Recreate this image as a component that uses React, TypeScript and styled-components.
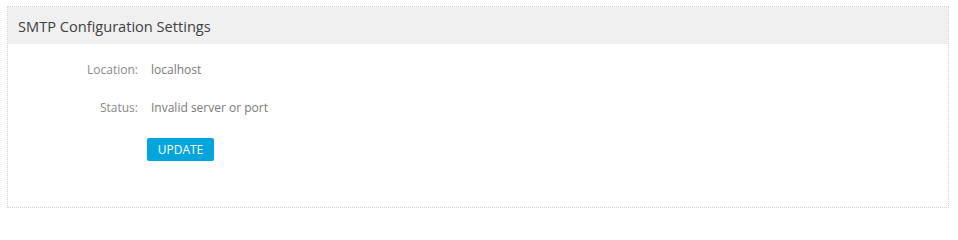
import styled, { createGlobalStyle } from 'styled-components';

const GlobalStyle = createGlobalStyle`
  html, body {
    margin: 0;
    padding: 0;
    background: #fff;
  }
  body {
    font-family: 'Open Sans', 'Liberation Sans', sans-serif;
  }
`;

const Page = styled.div`
  padding: 6px 9px 7px 7px;
`;

const Panel = styled.section`
  border: 1px dotted #d4d4d4;
  height: 202px;
  box-sizing: border-box;
  background: #fff;
`;

const Header = styled.header`
  background: #f0f0f0;
  height: 37px;
  display: flex;
  align-items: center;
  padding: 0 10px;

  h2 {
    margin: 0;
    font-size: 14.6px;
    font-weight: 400;
    color: #3f3f3f;
  }
`;

const Body = styled.div`
  padding: 7px 0 0 0;
  display: flex;
  flex-direction: column;
`;

const Row = styled.div`
  display: flex;
  align-items: center;
  gap: 13px;
  height: 38px;
  font-size: 12px;
  line-height: 18px;
`;

const Label = styled.span`
  width: 130px;
  flex: none;
  text-align: right;
  color: #8a8a8a;
`;

const Value = styled.span`
  color: #7a7a7a;
`;

const Actions = styled.div`
  padding: 11px 0 0 139px;
`;

const Button = styled.button`
  display: block;
  width: 67px;
  height: 23px;
  border: none;
  border-radius: 2px;
  background: #04a5dc;
  color: #fff;
  font-family: 'Open Sans', 'Liberation Sans', sans-serif;
  font-size: 12px;
  padding: 0;
  cursor: pointer;
`;

const rows = [
  { label: 'Location:', value: 'localhost' },
  { label: 'Status:', value: 'Invalid server or port' },
];

export default function App() {
  return (
    <>
      <GlobalStyle />
      <Page>
        <Panel>
          <Header>
            <h2>SMTP Configuration Settings</h2>
          </Header>
          <Body>
            {rows.map((r) => (
              <Row key={r.label}>
                <Label>{r.label}</Label>
                <Value>{r.value}</Value>
              </Row>
            ))}
            <Actions>
              <Button>UPDATE</Button>
            </Actions>
          </Body>
        </Panel>
      </Page>
    </>
  );
}
